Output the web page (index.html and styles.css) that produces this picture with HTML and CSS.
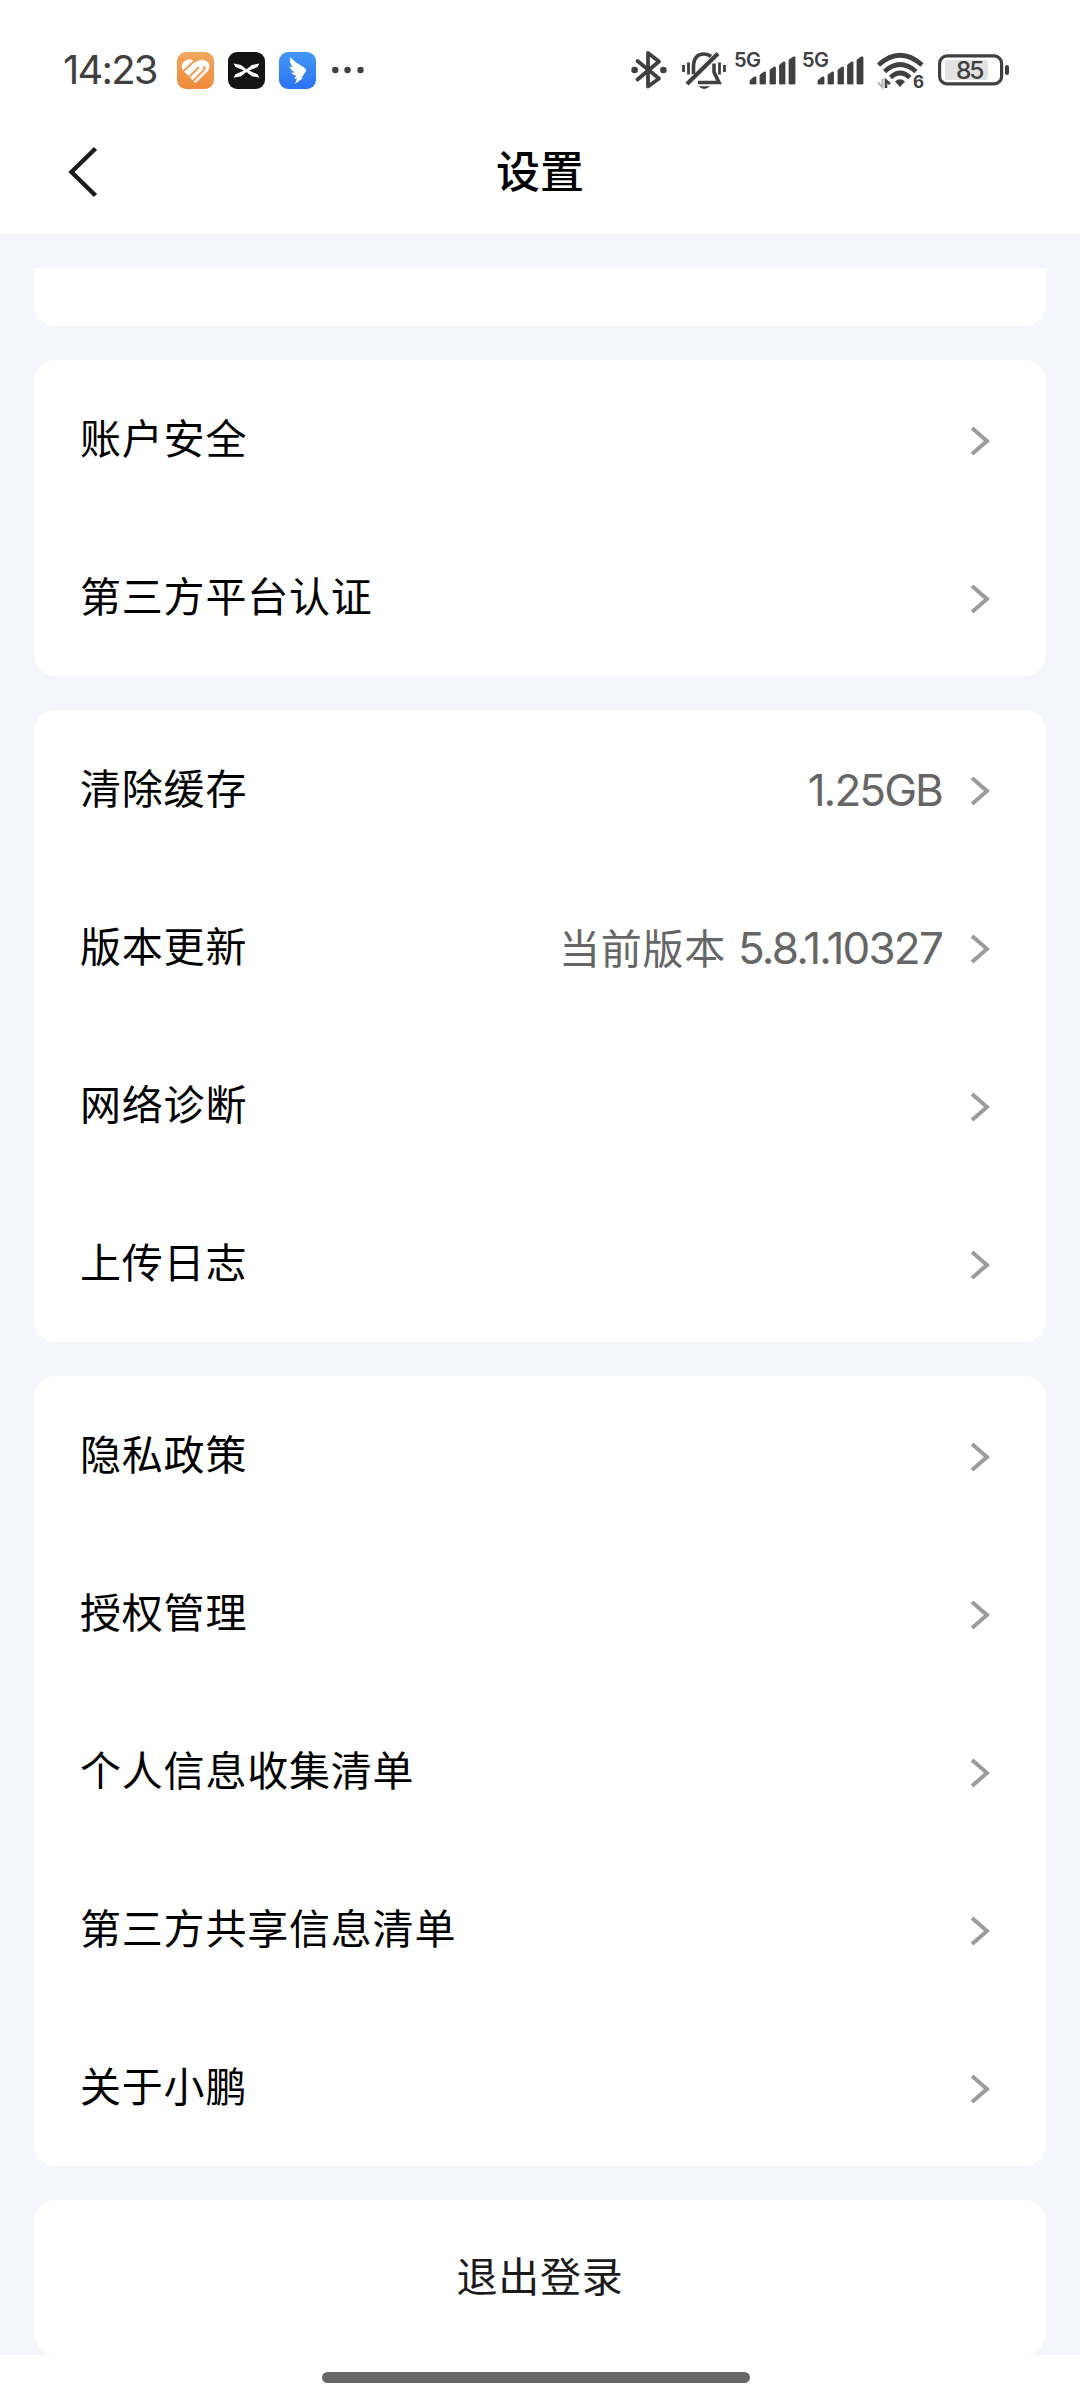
FILE: index.html
```
<!DOCTYPE html>
<html lang="zh-CN">
<head>
  <meta charset="utf-8">
  <title>设置</title>
  <link rel="stylesheet" href="styles.css">
</head>
<body>

<svg class="defs">
  <symbol id="arrow" viewBox="0 0 20 30">
    <path d="M2 2 L17 15 L2 28" fill="none" stroke="#9c9c9c" stroke-width="4"/>
  </symbol>
  <symbol id="bars" viewBox="0 0 62 40">
    <path d="M16 34v-3.500l4-3.500h2v7zM26 34v-9l4-3h1.500v12zM36 34v-14l4-3h1.500v17zM45.500 34v-19l4-3h1.500v22zM55 34v-24l4-3h2v27z" fill="#404040" stroke="#404040" stroke-width=".8" stroke-linejoin="round"/>
  </symbol>
</svg>

<div class="statusbar">
  <span class="time">14:23</span>
  <div class="apps">
    <svg width="37" height="37" viewBox="0 0 37 37">
      <defs><linearGradient id="orange" x2="0" y2="1"><stop stop-color="#f2a860"/><stop offset="1" stop-color="#ef8a3a"/></linearGradient></defs>
      <rect width="37" height="37" rx="9" fill="url(#orange)"/>
      <path d="M18.500 31 L7 19.500 Q2.500 14 6.500 10 Q11 6 16 8.500 L18.500 10.500 Q22 7 27 8 Q33 10 32.500 15 Q32 18 30 20z" fill="#fff"/>
      <path d="M6 19.500 L18 8.500M11.500 25.500 L22 15M16 29 L26.500 18.500 Q28.500 16 27 14" fill="none" stroke="#f09a4d" stroke-width="1.800"/>
    </svg>
    <svg width="37" height="37" viewBox="0 0 37 37">
      <rect width="37" height="37" rx="9" fill="#141414"/>
      <path d="M5.500 11.500 L13 13 L18.500 17.200 L24 13 L31.500 11.500 L29.500 15 L21 18.600 L29.500 22.300 L31.500 25.700 L24 24.200 L18.500 20 L13 24.200 L5.500 25.700 L7.500 22.300 L16 18.600 L7.500 15z" fill="#fff"/>
    </svg>
    <svg width="37" height="37" viewBox="0 0 37 37">
      <defs><linearGradient id="blue" x2="0" y2="1"><stop stop-color="#4499f5"/><stop offset="1" stop-color="#2b73f5"/></linearGradient></defs>
      <rect width="37" height="37" rx="9" fill="url(#blue)"/>
      <path d="M11.500 5 Q14 9 22 13.500 Q27.500 16.500 27 19 L22.500 26 H24 L16 32 L18 26.500 H15 L17.500 23.500 Q13.500 23 12.500 20.500 L16 20.500 Q11 17.500 10.500 14.500 L14 15.500 Q9.500 10 11.500 5z" fill="#fff"/>
    </svg>
  </div>
  <svg class="more" width="32" height="8"><g fill="#404040"><circle cx="3.300" cy="4" r="3.200"/><circle cx="15.500" cy="4" r="3.200"/><circle cx="28.500" cy="4" r="3.200"/></g></svg>

  <div class="system">
    <!-- bluetooth -->
    <svg width="36" height="40" viewBox="0 0 36 40">
      <path d="M6.500 11 L28 28.500 L17 36.500 V3 L28 11.500 L6.500 29.500" fill="none" stroke="#404040" stroke-width="3.800" stroke-linejoin="round" stroke-linecap="round"/>
      <circle cx="3.600" cy="20" r="3.300" fill="#404040"/><circle cx="32.400" cy="20" r="3.300" fill="#404040"/>
    </svg>
    <!-- muted bell -->
    <svg class="bell" width="44" height="40" viewBox="0 0 44 40">
      <g fill="none" stroke="#404040" stroke-width="3.600">
        <path d="M5 34 L36 3.500" stroke-width="4.200"/>
        <path d="M11.500 24 V15 Q12.500 4 22 4 Q26 4 29 6.500"/>
        <path d="M32 13.500 V22 L37 32.500 H16"/>
        <path d="M1.500 15 V22M6.500 12.500 V24.500M37.500 12.500 V24.500M42.500 15 V22" stroke-width="2.800"/>
      </g>
      <path d="M16.500 36.200 H28 Q22 42 16.500 36.200z" fill="#404040"/>
    </svg>
    <svg class="sig" width="62" height="40"><use href="#bars"/><text x="0" y="17" textLength="27">5G</text></svg>
    <svg class="sig" width="62" height="40"><use href="#bars"/><text x="0" y="17" textLength="27">5G</text></svg>
    <!-- wifi 6 -->
    <svg class="wifi" width="47" height="40" viewBox="0 0 47 40">
      <g fill="none" stroke="#404040" stroke-width="4.600">
        <path d="M1.500 15 Q23 -4.500 45 15"/>
        <path d="M7.500 21.500 Q23 7.500 39 21.500"/>
        <path d="M13.500 27.500 Q23 18.500 33 27.500"/>
      </g>
      <path d="M18 31.500 Q23 27 28 31.500 L23 37z" fill="#404040"/>
      <path d="M5.500 29 V37 L1 32.500" fill="none" stroke="#b5b5b5" stroke-width="2.200"/>
      <path d="M9 38 V30.500 L13 34" fill="none" stroke="#404040" stroke-width="2.600"/>
      <text x="36" y="37.500" font-size="17" font-weight="700" fill="#404040">6</text>
    </svg>
    <!-- battery -->
    <svg class="battery" width="72" height="32" viewBox="0 0 72 32">
      <rect x="1.600" y="1.900" width="62" height="28" rx="7.500" fill="none" stroke="#404040" stroke-width="3.200"/>
      <rect x="7" y="6" width="43" height="20" rx="3" fill="#e2e2e2"/>
      <rect x="67" y="11" width="4" height="10" rx="2" fill="#404040"/>
      <text x="18" y="25" font-size="24.500" font-weight="500" textLength="28.500" fill="#404040">85</text>
    </svg>
  </div>
</div>

<div class="header">
  <svg class="back" width="32" height="50" viewBox="0 0 32 50"><path d="M29.500 1.500 L5.500 25 L29.500 48.500" fill="none" stroke="#1b1b1b" stroke-width="4.400"/></svg>
  <h1>设置</h1>
</div>

<div class="content">
  <div class="card card-cut"></div>

  <div class="card">
    <div class="row"><span class="label">账户安全</span><svg class="arrow"><use href="#arrow"/></svg></div>
    <div class="row"><span class="label">第三方平台认证</span><svg class="arrow"><use href="#arrow"/></svg></div>
  </div>

  <div class="card">
    <div class="row"><span class="label">清除缓存</span><span class="value"><span class="num size">1.25GB</span></span><svg class="arrow"><use href="#arrow"/></svg></div>
    <div class="row"><span class="label">版本更新</span><span class="value">当前版本<span class="num version">5.8.1.10327</span></span><svg class="arrow"><use href="#arrow"/></svg></div>
    <div class="row"><span class="label">网络诊断</span><svg class="arrow"><use href="#arrow"/></svg></div>
    <div class="row"><span class="label">上传日志</span><svg class="arrow"><use href="#arrow"/></svg></div>
  </div>

  <div class="card">
    <div class="row"><span class="label">隐私政策</span><svg class="arrow"><use href="#arrow"/></svg></div>
    <div class="row"><span class="label">授权管理</span><svg class="arrow"><use href="#arrow"/></svg></div>
    <div class="row"><span class="label">个人信息收集清单</span><svg class="arrow"><use href="#arrow"/></svg></div>
    <div class="row"><span class="label">第三方共享信息清单</span><svg class="arrow"><use href="#arrow"/></svg></div>
    <div class="row"><span class="label">关于小鹏</span><svg class="arrow"><use href="#arrow"/></svg></div>
  </div>

  <div class="card logout">退出登录</div>
</div>

<div class="navbar"><div class="handle"></div></div>

</body>
</html>
```
FILE: styles.css
```
* {box-sizing: border-box}

body {
  margin: 0;
  background: #fff;
  color: #000;
  font-family: Inter, "Noto Sans CJK SC", sans-serif;
}

svg {
  display: block;
  flex: none;
  overflow: visible;
}

.defs {
  position: absolute;
  width: 0;
  height: 0;
}

.statusbar {
  display: flex;
  align-items: center;
  height: 110px;
  padding: 30px 70px 0 63px;
}

.time {
  width: 114px;
  font-size: 40px;
  line-height: 40px;
  letter-spacing: -1.8px;
  color: #404040;
}

.apps {
  display: flex;
  gap: 14px;
}

.more {
  margin-left: 16px;
}

.system {
  display: flex;
  align-items: center;
  margin-left: auto;
}

.bell {
  margin-left: 15px;
}

.sig {
  margin-left: 6px;
  font-size: 20px;
  font-weight: 600;
  fill: #404040;
}

.bell + .sig {
  margin-left: 8px;
}

.wifi {
  margin-left: 13px;
}

.battery {
  margin-left: 14px;
}

.header {
  display: flex;
  align-items: center;
  height: 124px;
  padding: 0 66px;
}

.header h1 {
  flex: 1;
  margin: 0 32px 0 0;
  font-size: 44px;
  font-weight: 500;
  line-height: 60px;
  text-align: center;
}

.content {
  display: flex;
  flex-direction: column;
  gap: 34px;
  padding: 34px 34px 0;
  background: #f5f6fb;
}

.card {
  background: #fff;
  border-radius: 21px;
}

.card-cut {
  height: 58px;
  border-radius: 0 0 21px 21px;
}

.row {
  display: flex;
  align-items: center;
  height: 158px;
  padding: 0 56px 0 46px;
}

.label {
  flex: 1;
  padding-bottom: 7px;
  font-size: 41px;
  letter-spacing: 0.8px;
}

.value {
  display: flex;
  align-items: center;
  margin-right: 28px;
  padding-bottom: 2px;
  font-size: 41px;
  letter-spacing: 0.8px;
  color: #666;
}

.num {
  padding-top: 4px;
  font-size: 44px;
  font-weight: 400;
}

.size {
  letter-spacing: -1.9px;
}

.version {
  margin-left: 12px;
  letter-spacing: -1.8px;
}

.arrow {
  width: 20px;
  height: 30px;
  margin-top: 4px;
}

.logout {
  height: 155px;
  font-size: 41px;
  letter-spacing: 0.8px;
  line-height: 155px;
  text-align: center;
  color: #1b1b1b;
}

.navbar {
  display: flex;
  justify-content: center;
  height: 45px;
  padding: 17px 8px 0 0;
}

.handle {
  width: 428px;
  height: 11px;
  border-radius: 6px;
  background: #676767;
}
```
